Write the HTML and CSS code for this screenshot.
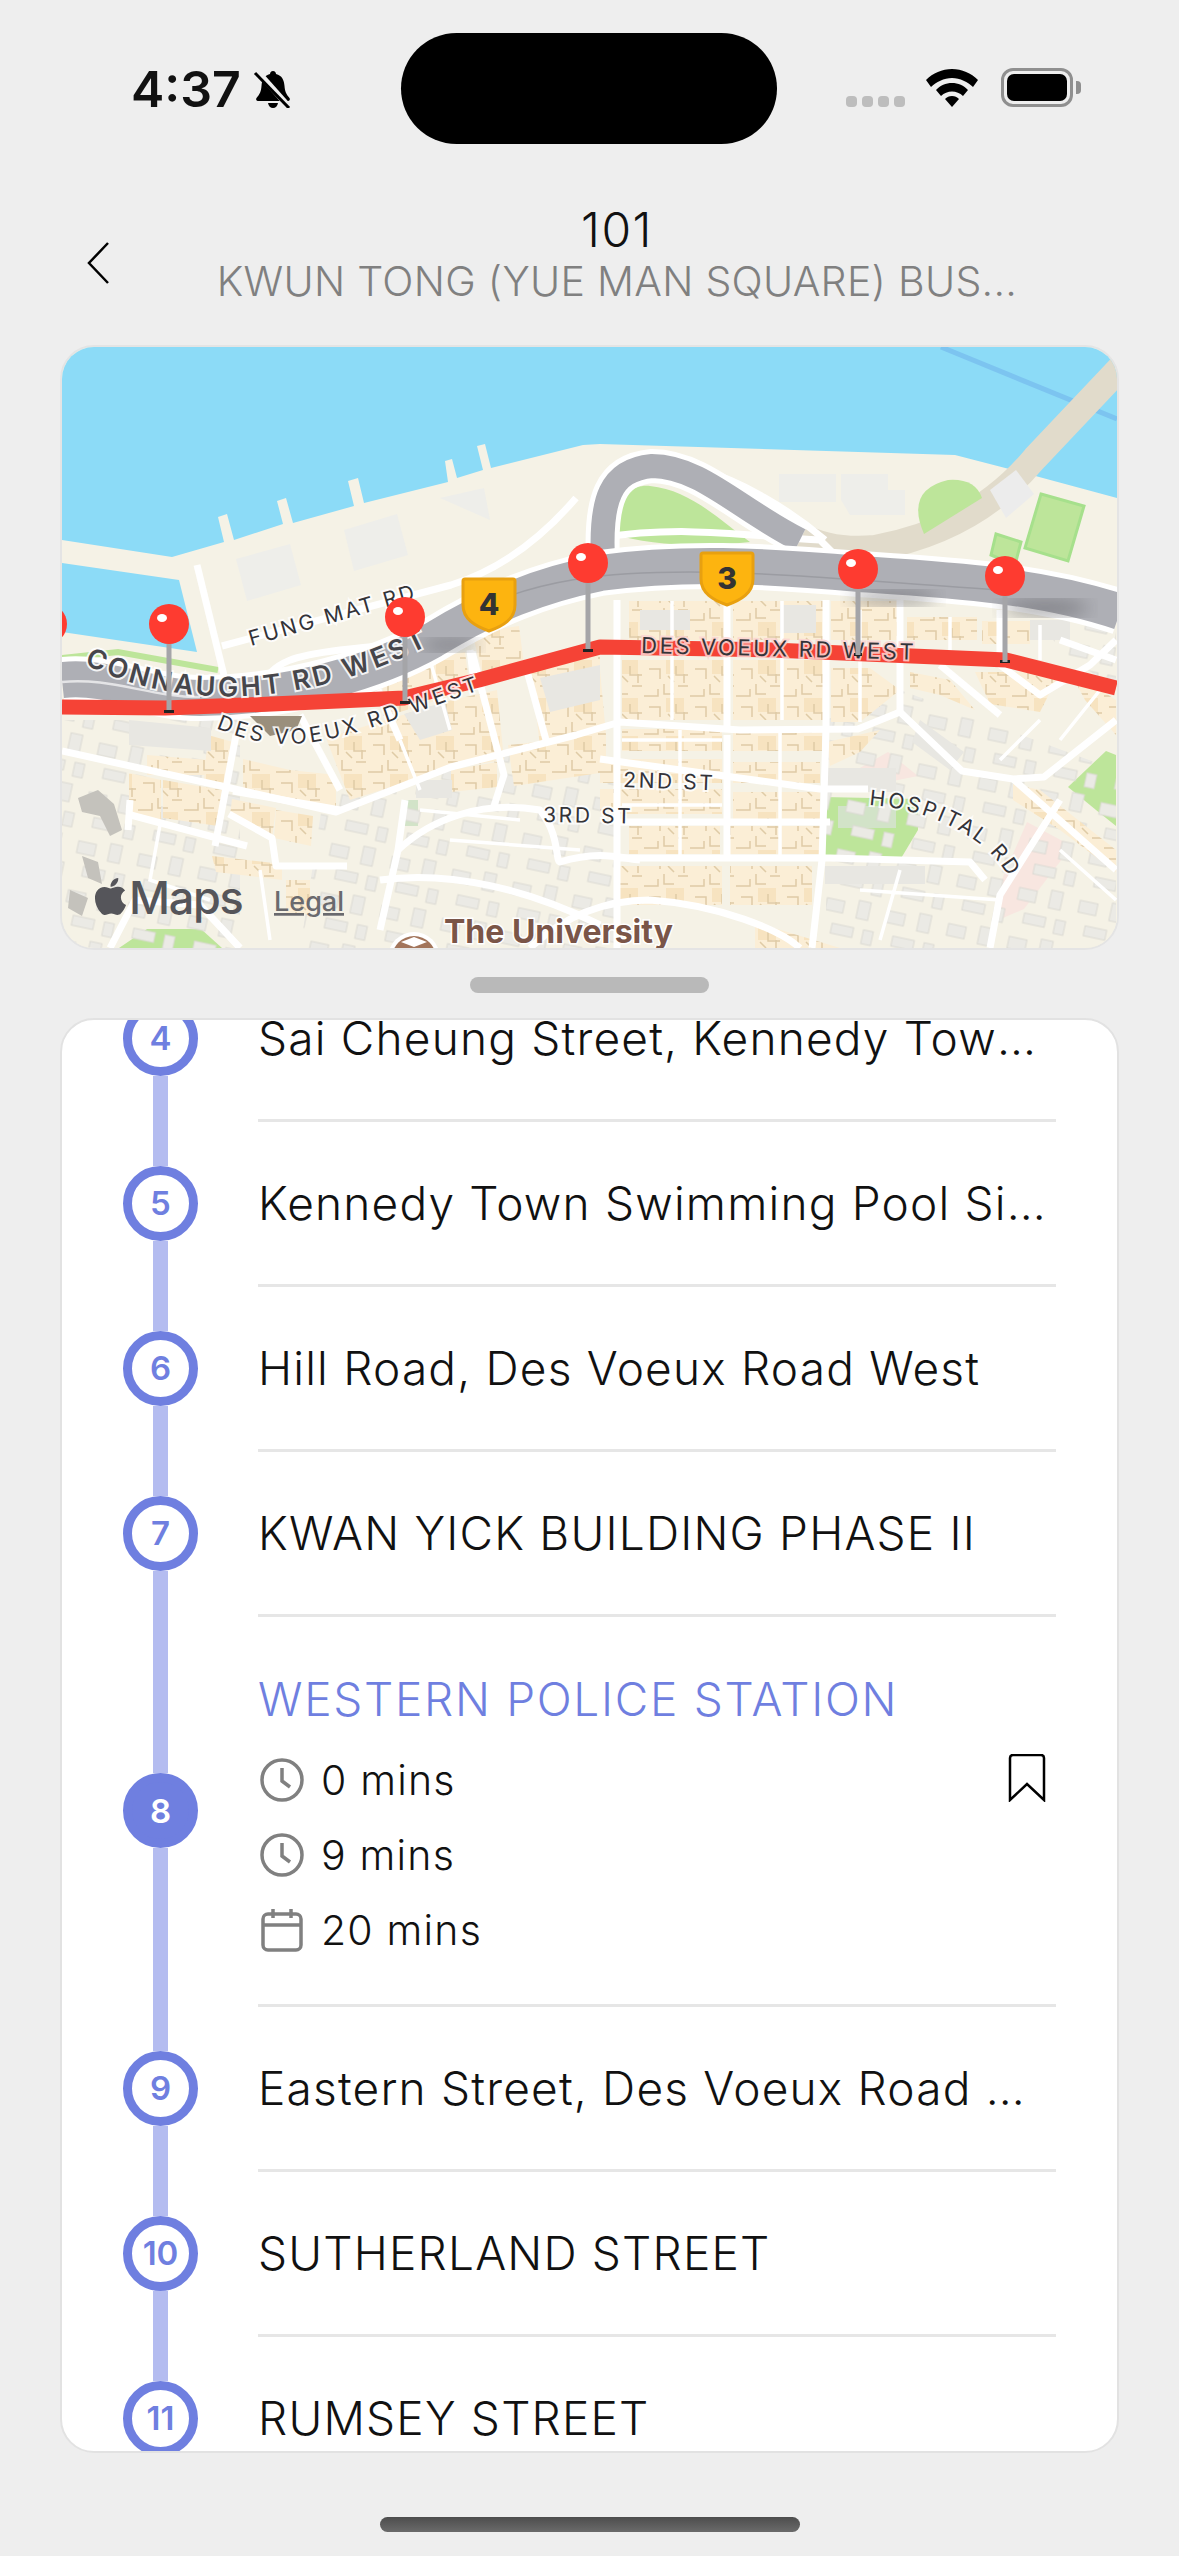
FILE: index.html
```html
<!DOCTYPE html>
<html lang="en">
<head>
  <meta charset="UTF-8">
  <meta name="viewport" content="width=device-width, initial-scale=1.0">
  <title>Route 101</title>
  <link rel="stylesheet" href="styles.css">
</head>
<body>
  <div class="island"></div>

  <div class="status-bar">
    <div class="status-left">
      <span class="time">4:37</span>
      <svg class="bell" viewBox="0 0 40 38">
        <path class="solid" d="M20 1c-2 0-3 1.500-3 3-6 1.500-8 6-8.500 12-.4 5-1.500 8-5 12-1 1.500 0 3 1.500 3h30c1.500 0 2.500-1.500 1.500-3-3.500-4-4.600-7-5-12-.5-6-2.500-10.500-8.500-12 0-1.500-1-3-3-3z"/>
        <path class="solid" d="M15 33h10c-.5 3-2.500 5-5 5s-4.500-2-5-5z"/>
        <path class="slash-gap" d="M4 1l33 37"/>
        <path class="slash" d="M2 3l34 35"/>
      </svg>
    </div>
    <div class="status-right">
      <div class="signal"><i></i><i></i><i></i><i></i></div>
      <svg class="wifi" viewBox="0 0 52 38">
        <path class="solid" d="M26 0c10 0 19 4 26 11l-5 7c-5-5-13-9-21-9S10 13 5 18L0 11C7 4 16 0 26 0z"/>
        <path class="solid" d="M26 14c6 0 12 2.500 16 7l-5 6c-3-3-7-4.500-11-4.500S18 24 15 27l-5-6c4-4.500 10-7 16-7z"/>
        <path class="solid" d="M26 27c3 0 5 1 7 3l-7 8-7-8c2-2 4-3 7-3z"/>
      </svg>
      <div class="battery"><div class="battery-level"></div></div>
      <div class="battery-nub"></div>
    </div>
  </div>

  <div class="nav">
    <div class="back">
      <svg viewBox="0 0 22 42"><path class="line-black" d="M21 1L2 21l19 20"/></svg>
    </div>
    <div class="title">
      <div class="route-no">101</div>
      <div class="route-name">KWUN TONG (YUE MAN SQUARE) BUS...</div>
    </div>
  </div>

  <div class="map-card">
    <svg class="map" viewBox="62 347 1055 601">
      <defs>
        <filter id="soft"><feGaussianBlur stdDeviation="9"/></filter>
        <pattern id="hatch" width="46" height="38" patternUnits="userSpaceOnUse">
          <rect class="hatch-base" width="46" height="38"/>
          <rect class="hatch-fill" x="22" y="14" width="18" height="14"/>
          <path class="hatch-line" d="M0 12h14V5M20 0v10h10M34 2h10M32 20v9h12M5 23h11v10M24 30l6 6M40 28v9"/>
        </pattern>
        <pattern id="hill" width="62" height="50" patternUnits="userSpaceOnUse" patternTransform="rotate(12)">
          <rect class="hill-block" x="4" y="6" width="18" height="12"/>
          <rect class="hill-block" x="36" y="2" width="12" height="18"/>
          <rect class="hill-block" x="14" y="30" width="22" height="10"/>
          <rect class="hill-block" x="46" y="30" width="10" height="14"/>
        </pattern>
        <path id="curveConnaught" d="M84 664 C 150 696 220 702 285 692 C 340 684 395 664 450 634"/>
        <path id="curveVoeux" d="M216 728 C 240 738 262 744 290 744 C 350 742 410 712 510 680"/>
        <path id="curveHospital" d="M869 805 C 910 808 950 820 985 848 C 1000 862 1010 875 1030 915"/>
      </defs>

      <rect class="land" x="62" y="347" width="1055" height="601"/>
      <path class="water" d="M62 347H1117V498L1013 470 955 455 600 444 583 445 491 468 485 444 477 446 483 470 457 478 452 459 445 461 448 482 364 503 358 478 348 481 354 506 293 523 286 498 277 501 283 524 234 540 227 514 218 517 224 542 172 557 62 540Z"/>
      <path class="water" d="M62 563L179 580 197 652 62 632Z"/>
      <path class="channel" d="M941 347L1117 419"/>
      <path class="causeway" d="M1122 366L1035 458Q975 530 875 548 830 552 800 535"/>
      <path class="causeway-cap" d="M990 490l16 28 28-24-18-24z"/>

      <!-- port sheds -->
      <path class="shed" d="M236 559L290 544 301 585 247 601Z"/>
      <path class="shed" d="M344 530L397 514 408 555 354 571Z"/>
      <path class="shed" d="M440 498L484 488 490 520Z"/>
      <path class="shed" d="M779 474H836V502H779Z"/>
      <path class="shed" d="M841 474H888V490H905V515H850L841 500Z"/>

      <!-- parks -->
      <path class="park" d="M924 534Q905 490 948 480 975 478 982 498Z"/>
      <path class="park-edge" d="M1041 494L1084 506 1068 561 1025 548Z"/>
      <path class="park-edge" d="M996 534L1021 542 1015 565 991 555Z"/>
      <path class="park-edge" d="M841 688H855V712H841Z"/>
      <path class="park" d="M824 797L918 799 918 830 900 860 824 858Z"/>
      <path class="park-pale" d="M838 806H896V828H838Z"/>
      <path class="park" d="M1068 787L1106 751 1116 755 1116 826 1096 810Z"/>
      <path class="park" d="M119 948L147 929H201L222 948Z"/>
      <path class="park" d="M612 534C606 500 630 484 650 486 690 490 720 520 750 542 700 548 650 545 612 534Z"/>
      <path class="park-stroke" d="M62 658L118 652 218 670"/>
      <path class="hospital" d="M1027 822L1072 846 1024 909 996 921V893Z"/>
      <path class="hospital" d="M860 768l28-16 30 24-30 6z"/>
      <path class="park-pale" d="M404 800h14v26h-14z"/>

      <!-- hillside housing -->
      <g class="hill-areas">
        <path d="M62 720H240V950H62Z"/>
        <path d="M326 780L520 745 620 780V950H300Z"/>
        <path d="M826 720L900 690 1116 770V950H826Z"/>
        <path d="M1040 620H1116V690L1060 650Z"/>
      </g>

      <!-- built up blocks -->
      <g class="blocks">
        <path d="M383 668L465 652 470 690 400 712 383 716Z"/>
        <path d="M472 632L519 626 524 665 483 676Z"/>
        <path d="M530 664L600 648V670L606 735 540 746Z"/>
        <path d="M326 738L452 700 497 690 504 760 451 768 350 800Z"/>
        <path d="M451 770L497 762V787L451 792Z"/>
        <path d="M508 745L606 735V772L514 786Z"/>
        <path d="M147 755L208 760V775H147Z"/>
        <path d="M208 735L233 742 224 783 204 780Z"/>
        <path d="M243 759L290 770 336 775V808L243 790Z"/>
        <path d="M129 773L161 780V822L129 815Z"/>
        <path d="M163 780L222 790 218 826 163 818Z"/>
        <path d="M232 799L276 808 272 838 230 816Z"/>
        <path d="M276 810L313 816 311 846 274 838Z"/>
        <path d="M212 856L282 864V880L216 872Z"/>
        <path d="M286 880h24v34h-24z"/>
        <path d="M629 601H724V640H629Z"/>
        <path d="M733 601H827V640H733Z"/>
        <path d="M831 601H900V640H831Z"/>
        <path d="M907 617H977V640H907Z"/>
        <path d="M982 621H1030V644H982Z"/>
        <path d="M622 660H724V720H622Z"/>
        <path d="M733 660H827V720H733Z"/>
        <path d="M831 668H870L900 690 860 722H831Z"/>
        <path d="M910 672L950 680 975 710 940 695 910 688Z"/>
        <path d="M975 672H1060L1040 712 990 704Z"/>
        <path d="M1068 668L1116 700V735L1085 700Z"/>
        <path d="M622 729H722V751H622Z"/>
        <path d="M733 729H822V751H733Z"/>
        <path d="M827 742L880 730 860 752 830 766Z"/>
        <path d="M600 759H722V783H600Z"/>
        <path d="M733 762H820V783H733Z"/>
        <path d="M600 789H722V814H600Z"/>
        <path d="M733 792H820V820H733Z"/>
        <path d="M629 826H720V854H629Z"/>
        <path d="M730 826H820V854H730Z"/>
        <path d="M618 866H722V905H618Z"/>
        <path d="M730 866H812V905H730Z"/>
        <path d="M1013 784L1040 790 1116 850V872L1060 830 1013 800Z"/>
        <path d="M755 922L840 948H755Z"/>
      </g>

      <!-- grey buildings -->
      <g class="grey-blocks">
        <path d="M129 720L211 728V751L129 745Z"/>
        <path d="M404 714L445 702 452 730 420 740Z"/>
        <path d="M540 678L600 665V700L550 712Z"/>
        <path d="M416 780h36v18h-36z"/>
        <path d="M826 768h70v24h-70z"/>
        <path d="M920 720l44 32-14 18-38-28z"/>
        <path d="M825 866h100v18h-100z"/>
        <path d="M780 605h36v28h-36z"/>
        <path d="M640 610h50v20h-50z"/>
        <path d="M1030 620h40v20h-40z"/>
      </g>
      <path class="dark-blocks" d="M78 798l20-8 16 14 8 26-12 6-10-20-18-4zM82 856l16 6 4 22-14-6zM70 890l18 8-6 18-14-8z"/>

      <!-- streets -->
      <g class="streets">
        <path d="M62 751L226 787 336 812 451 767 576 735 620 722 740 730 858 729 900 712 962 771 1013 779 1044 777 1116 720"/>
        <path d="M236 735L215 846"/>
        <path d="M472 652L504 775 494 806"/>
        <path d="M600 759L820 789H868"/>
        <path d="M620 822H830"/>
        <path d="M620 858H830L970 862 985 880"/>
        <path d="M617 600V948"/>
        <path d="M727 600V730M727 735V860"/>
        <path d="M826 600V730L822 860 812 948"/>
        <path d="M900 600V712"/>
        <path d="M1000 610V665L1040 695 1090 665 1116 640"/>
        <path d="M940 665L1000 715"/>
        <path d="M1013 779L1116 870"/>
        <path d="M1060 800L1000 895 990 948"/>
        <path d="M127 814L247 846"/>
        <path d="M233 791L340 810"/>
        <path d="M229 814L272 838 276 866 347 866"/>
        <path d="M130 800L128 830"/>
        <path d="M405 800L398 850 380 930"/>
        <path d="M398 850C430 820 480 800 540 810 560 835 555 860 560 862 600 850 620 858 640 860"/>
        <path d="M380 880C450 870 530 890 600 925"/>
        <path d="M110 948L135 900 200 905 240 948"/>
        <path d="M530 948C560 920 600 900 650 900 720 905 780 930 800 948"/>
        <path d="M300 715L340 790"/>
        <path d="M378 690L400 740"/>
        <path d="M470 650L475 690"/>
        <path d="M524 660L546 740"/>
        <path d="M197 565L229 696"/>
        <path d="M222 646L451 585C500 570 540 540 576 498"/>
        <path d="M260 690C270 660 300 655 340 650 390 645 440 640 470 625"/>
        <path d="M600 538C680 525 740 535 820 540L850 570"/>
        <path d="M700 470C740 480 790 510 825 540"/>
        <path d="M1116 660L1060 640"/>
      </g>
      <g class="lanes">
        <path d="M672 601V720M782 601V720M622 740H722M622 805H722M680 730V860M780 730V860M860 610V722"/>
        <path d="M950 617V665M1040 625V660M430 660L450 730M400 740L420 790"/>
        <path d="M1100 690L1060 740M1040 720L1000 760M160 825L150 880 210 900M260 870L270 940"/>
        <path d="M420 810L520 820M450 840L580 850M860 890L1000 900M900 870L880 940M1060 850L1116 900"/>
      </g>

      <!-- highways -->
      <path class="hw-edge" d="M603 560C600 500 610 470 652 466 700 466 740 510 800 540"/>
      <path class="hw" d="M603 560C600 500 610 470 652 466 700 466 740 510 800 540"/>
      <path class="hw-edge wide" d="M62 680C110 675 150 698 200 698 290 698 380 670 433 640 490 605 540 585 600 573 680 562 760 565 860 574 950 580 1040 585 1120 612"/>
      <path class="hw wide" d="M62 680C110 675 150 698 200 698 290 698 380 670 433 640 490 605 540 585 600 573 680 562 760 565 860 574 950 580 1040 585 1120 612"/>
      <path class="hw-split" d="M470 612C540 578 610 572 690 572 780 572 900 584 1000 590"/>
      <path class="hw-lane" d="M62 682C110 677 150 697 200 697"/>
      <ellipse class="under" cx="893" cy="598" rx="44" ry="7" filter="url(#soft)"/>
      <ellipse class="under" cx="1045" cy="608" rx="44" ry="8" filter="url(#soft)"/>
      <ellipse class="under" cx="450" cy="645" rx="30" ry="6" filter="url(#soft)"/>

      <!-- route -->
      <path class="route" d="M62 707L165 708 272 704 404 698 479 680 600 647 772 650 1006 660 1116 688"/>
      <path class="landmark" d="M250 716h52l-6 14-26 6z"/>

      <!-- labels -->
      <text class="label label-big"><textPath href="#curveConnaught">CONNAUGHT RD WEST</textPath></text>
      <text class="label" transform="translate(251 646) rotate(-16)">FUNG MAT RD</text>
      <text class="label label-curve"><textPath href="#curveVoeux">DES VOEUX RD WEST</textPath></text>
      <text class="label label-route" transform="translate(641 653) rotate(1.4)">DES VOEUX RD WEST</text>
      <text class="label" transform="translate(623 787) rotate(2)">2ND ST</text>
      <text class="label" transform="translate(543 822) rotate(1)">3RD ST</text>
      <text class="label"><textPath href="#curveHospital">HOSPITAL RD</textPath></text>

      <!-- shields -->
      <g transform="translate(463 579)">
        <path class="shield" d="M2 0h48q2 0 2 2v24C52 40 40 47 26 52 12 47 0 40 0 26V2q0-2 2-2z"/>
        <text class="shield-no" x="26" y="36">4</text>
      </g>
      <g transform="translate(701 553)">
        <path class="shield" d="M2 0h48q2 0 2 2v24C52 40 40 47 26 52 12 47 0 40 0 26V2q0-2 2-2z"/>
        <text class="shield-no" x="26" y="36">3</text>
      </g>

      <!-- pins -->
      <g class="pin" transform="translate(169 624)"><path class="pin-foot" d="M-5 86h10v3h-10z"/><path class="pin-stem" d="M0 18V86"/><circle class="pin-head" r="20"/><ellipse class="pin-shine" cx="-7" cy="-6" rx="5" ry="4"/></g>
      <g class="pin" transform="translate(405 617)"><path class="pin-foot" d="M-5 84h10v3h-10z"/><path class="pin-stem" d="M0 18V84"/><circle class="pin-head" r="20"/><ellipse class="pin-shine" cx="-7" cy="-6" rx="5" ry="4"/></g>
      <g class="pin" transform="translate(588 563)"><path class="pin-foot" d="M-5 86h10v3h-10z"/><path class="pin-stem" d="M0 18V86"/><circle class="pin-head" r="20"/><ellipse class="pin-shine" cx="-7" cy="-6" rx="5" ry="4"/></g>
      <g class="pin" transform="translate(858 569)"><path class="pin-foot" d="M-4 84h8v3h-8z"/><path class="pin-stem" d="M0 18V86"/><circle class="pin-head" r="20"/><ellipse class="pin-shine" cx="-7" cy="-6" rx="5" ry="4"/></g>
      <g class="pin" transform="translate(1005 576)"><path class="pin-foot" d="M-5 84h10v3h-10z"/><path class="pin-stem" d="M0 18V86"/><circle class="pin-head" r="20"/><ellipse class="pin-shine" cx="-7" cy="-6" rx="5" ry="4"/></g>
      <circle class="pin-head" cx="47" cy="624" r="20"/>

      <!-- attribution -->
      <svg x="92" y="876" width="37" height="41" viewBox="3 2 18 20">
        <path class="maps-mark" d="M17.050 20.280c-.98.95-2.050.8-3.080.35-1.090-.46-2.090-.48-3.240 0-1.440.62-2.200.44-3.060-.35C2.790 15.250 3.510 7.590 9.050 7.310c1.350.07 2.290.74 3.080.8 1.180-.24 2.310-.93 3.570-.84 1.510.12 2.650.72 3.400 1.800-3.120 1.870-2.380 5.980.48 7.130-.57 1.500-1.310 2.990-2.540 4.090zM12.030 7.250c-.15-2.230 1.660-4.070 3.740-4.250.29 2.580-2.340 4.500-3.740 4.250z"/>
      </svg>
      <text class="maps-word" x="129" y="914">Maps</text>
      <text class="maps-legal" x="274" y="911">Legal</text>
      <circle class="uni-ring" cx="414" cy="958" r="26"/>
      <circle class="uni-dot" cx="414" cy="958" r="22"/>
      <path class="uni-cap" d="M414 937l13 5-13 5-13-5z"/>
      <text class="uni-name" x="444" y="943">The University</text>
    </svg>
  </div>

  <div class="handle"></div>

  <div class="stops-card">
    <div class="stops">
      <div class="stop">
        <div class="rail"><div class="seg"></div><div class="node">4</div><div class="seg seg-end"></div></div>
        <div class="stop-body"><div class="stop-name">Sai Cheung Street, Kennedy Town Praya</div></div>
      </div>
      <div class="stop">
        <div class="rail"><div class="seg"></div><div class="node">5</div><div class="seg seg-end"></div></div>
        <div class="stop-body"><div class="stop-name">Kennedy Town Swimming Pool Sitting Out Area</div></div>
      </div>
      <div class="stop">
        <div class="rail"><div class="seg"></div><div class="node">6</div><div class="seg seg-end"></div></div>
        <div class="stop-body"><div class="stop-name">Hill Road, Des Voeux Road West</div></div>
      </div>
      <div class="stop">
        <div class="rail"><div class="seg"></div><div class="node">7</div><div class="seg seg-end"></div></div>
        <div class="stop-body"><div class="stop-name">KWAN YICK BUILDING PHASE II</div></div>
      </div>
      <div class="stop stop-open">
        <div class="rail"><div class="seg"></div><div class="node node-active">8</div><div class="seg seg-end"></div></div>
        <div class="stop-body stop-body-open">
          <div class="stop-name stop-name-active">WESTERN POLICE STATION</div>
          <div class="eta-wrap">
            <div class="etas">
              <div class="eta">
                <svg class="eta-icon" viewBox="0 0 44 44"><circle class="line-grey" cx="22" cy="22" r="20"/><path class="line-grey" d="M22 10v13l8 6"/></svg>
                <span>0 mins</span>
              </div>
              <div class="eta">
                <svg class="eta-icon" viewBox="0 0 44 44"><circle class="line-grey" cx="22" cy="22" r="20"/><path class="line-grey" d="M22 10v13l8 6"/></svg>
                <span>9 mins</span>
              </div>
              <div class="eta">
                <svg class="eta-icon" viewBox="0 0 44 44"><rect class="line-grey" x="3" y="6" width="38" height="36" rx="5"/><path class="line-grey" d="M3 17h38M13 1v9M31 1v9"/></svg>
                <span>20 mins</span>
              </div>
            </div>
            <svg class="bookmark" viewBox="0 0 38 48"><path class="line-black" d="M2 46V4q0-3 3-3h28q3 0 3 3v42L19 30z"/></svg>
          </div>
        </div>
      </div>
      <div class="stop">
        <div class="rail"><div class="seg"></div><div class="node">9</div><div class="seg seg-end"></div></div>
        <div class="stop-body"><div class="stop-name">Eastern Street, Des Voeux Road West</div></div>
      </div>
      <div class="stop">
        <div class="rail"><div class="seg"></div><div class="node">10</div><div class="seg seg-end"></div></div>
        <div class="stop-body"><div class="stop-name">SUTHERLAND STREET</div></div>
      </div>
      <div class="stop">
        <div class="rail"><div class="seg"></div><div class="node">11</div><div class="seg seg-end"></div></div>
        <div class="stop-body"><div class="stop-name">RUMSEY STREET</div></div>
      </div>
    </div>
  </div>

  <div class="home-bar"></div>
</body>
</html>
```

FILE: styles.css
```css
* {
  margin: 0;
  padding: 0;
  box-sizing: border-box;
}

body {
  font-family: 'Inter', 'Noto Sans', sans-serif;
  width: 1179px;
  height: 2556px;
  background: #eeeeee;
  color: #111;
  position: relative;
  overflow: hidden;
}

/* Status bar */
.island {
  position: absolute;
  left: 401px;
  top: 33px;
  width: 376px;
  height: 111px;
  border-radius: 56px;
  background: #000;
}

.status-bar {
  height: 190px;
  padding: 67px 98px 0 131px;
  display: flex;
  justify-content: space-between;
  align-items: flex-start;
}

.status-left {
  display: flex;
  align-items: center;
  gap: 12px;
}

.time {
  font-size: 50px;
  font-weight: 600;
  line-height: 44px;
}

.bell {
  width: 40px;
  height: 38px;
}

.solid { fill: #000; }
.slash-gap { fill: none; stroke: #eeeeee; stroke-width: 6; }
.slash { fill: none; stroke: #000; stroke-width: 3; }

.status-right {
  display: flex;
  align-items: center;
  padding-top: 1px;
}

.signal {
  display: flex;
  gap: 5px;
  margin-right: 21px;
  padding-top: 28px;
}

.signal i {
  width: 11px;
  height: 11px;
  border-radius: 4px;
  background: #bdbdbd;
}

.wifi {
  width: 52px;
  height: 38px;
  margin-right: 23px;
}

.battery {
  width: 72px;
  height: 39px;
  border: 3px solid #8f8f8f;
  border-radius: 12px;
  padding: 3px;
}

.battery-level {
  height: 100%;
  background: #000;
  border-radius: 7px;
}

.battery-nub {
  width: 5px;
  height: 13px;
  margin-left: 3px;
  border-radius: 0 4px 4px 0;
  background: #8f8f8f;
}

/* Nav */
.nav {
  height: 155px;
  padding: 13px 100px 0 87px;
  display: flex;
  align-items: flex-start;
}

.back {
  width: 68px;
  padding-top: 39px;
}

.back svg {
  display: block;
  width: 22px;
  height: 42px;
}

.line-black {
  fill: none;
  stroke: #000;
  stroke-width: 2.5;
}

.title {
  flex: 1;
  min-width: 0;
  text-align: center;
}

.route-no {
  font-size: 48px;
  font-weight: 300;
  line-height: 53px;
  letter-spacing: 1.500px;
}

.route-name {
  font-size: 41px;
  font-weight: 300;
  line-height: 50px;
  letter-spacing: 0.300px;
  color: #808080;
  white-space: nowrap;
}

/* Map */
.map-card {
  margin: 0 60px;
  height: 605px;
  border: 2px solid #e4e4e4;
  border-radius: 34px;
  overflow: hidden;
  background: #f5f1e4;
}

.map {
  display: block;
  width: 1055px;
  height: 601px;
}

.land { fill: #f5f2e6; }
.water { fill: #8cdbf7; }
.channel { fill: none; stroke: #7cc4f0; stroke-width: 5; }
.causeway { fill: none; stroke: #e1dbcb; stroke-width: 26; }
.causeway-cap { fill: #ececec; }
.shed { fill: #eeeeea; }
.park { fill: #bde59a; }
.park-edge { fill: #bde59a; stroke: #a6e08c; stroke-width: 3; }
.park-pale { fill: #d2e3c8; }
.park-stroke { fill: none; stroke: #bde59a; stroke-width: 6; }
.hospital { fill: #f8e6e0; }

.hatch-base { fill: #fbeed6; }
.hatch-fill { fill: #f7e3c0; }
.hatch-line { fill: none; stroke: #dfcba6; stroke-width: 1.500; }
.hill-block { fill: #ebeae5; stroke: #dcdad3; stroke-width: 1; }
.hill-areas { fill: url(#hill); }
.blocks { fill: url(#hatch); }
.grey-blocks { fill: #e8e7e2; }
.dark-blocks { fill: #c4c2bc; }

.streets { fill: none; stroke: #fff; stroke-width: 7; stroke-linejoin: round; }
.lanes { fill: none; stroke: #fff; stroke-width: 3.500; }

.hw, .hw-edge, .hw-split, .hw-lane { fill: none; }
.hw { stroke: #aeafb5; stroke-width: 24; }
.hw.wide { stroke-width: 36; }
.hw-edge { stroke: #fff; stroke-width: 34; }
.hw-edge.wide { stroke-width: 46; }
.hw-split { stroke: #9b9ca2; stroke-width: 1.500; }
.hw-lane { stroke: #e4e4e6; stroke-width: 2.500; }
.under { fill: #55555a; opacity: 0.55; }

.route { fill: none; stroke: #f54336; stroke-width: 15; stroke-linejoin: round; }
.landmark { fill: #9a8f7c; }

.label {
  font-size: 21px;
  letter-spacing: 2.600px;
  fill: #333338;
  stroke: #fff;
  stroke-width: 4px;
  stroke-opacity: 0.85;
  paint-order: stroke;
}

.label-big {
  font-size: 27px;
  font-weight: 600;
  letter-spacing: 3px;
  fill: #46464b;
}

.label-curve {
  letter-spacing: 3.300px;
}

.label-route {
  font-size: 22px;
  stroke: #fbd4d2;
}

.shield { fill: #fdb40f; stroke: #e8a010; stroke-width: 3; }

.shield-no {
  font-size: 30px;
  font-weight: 800;
  text-anchor: middle;
  fill: #333;
}

.pin-stem { stroke: #a5a5a8; stroke-width: 5; }
.pin-foot { fill: #222; }
.pin-head { fill: #fe3b30; }
.pin-shine { fill: #fff; }

.maps-mark { fill: #55555a; }

.maps-word {
  font-size: 45px;
  font-weight: 500;
  letter-spacing: -1.300px;
  fill: #55555a;
}

.maps-legal {
  font-size: 27px;
  font-weight: 500;
  fill: #6a6a6e;
  text-decoration: underline;
}

.uni-ring { fill: #fff; }
.uni-dot { fill: #a2745a; }
.uni-cap { fill: #fff; }

.uni-name {
  font-size: 32px;
  font-weight: 700;
  fill: #7a5548;
  stroke: #fff;
  stroke-width: 3px;
  paint-order: stroke;
}

.handle {
  width: 239px;
  height: 16px;
  margin: 27px 0 25px 470px;
  border-radius: 8px;
  background: #b9b9b9;
}

/* Stops */
.stops-card {
  margin: 0 60px;
  height: 1435px;
  border: 2px solid #e2e2e2;
  border-radius: 34px;
  background: #fff;
  overflow: hidden;
}

.stops {
  margin-top: -63px;
}

.stop {
  display: flex;
  height: 165px;
}

.stop-open {
  height: 390px;
}

.rail {
  width: 196px;
  padding-left: 61px;
  display: flex;
  flex-direction: column;
  flex-shrink: 0;
}

.seg {
  flex: 1 1 0;
  width: 15px;
  margin-left: 30px;
  background: #b4bcf0;
}

.seg-end {
  flex-basis: 3px;
}

.node {
  width: 75px;
  height: 75px;
  flex-shrink: 0;
  border: 9px solid #6f7fe0;
  border-radius: 50%;
  background: #fff;
  color: #6f7fe0;
  font-size: 33px;
  font-weight: 600;
  display: flex;
  align-items: center;
  justify-content: center;
}

.node-active {
  background: #6f7fe0;
  color: #fff;
}

.stop-body {
  flex: 1;
  min-width: 0;
  margin-right: 61px;
  border-bottom: 3px solid #e6e6e6;
  display: flex;
  flex-direction: column;
  justify-content: center;
}

.stop-body-open {
  justify-content: flex-start;
  padding-top: 54px;
}

.stop-name {
  font-size: 46px;
  font-weight: 300;
  line-height: 56px;
  letter-spacing: 1.200px;
  padding-right: 10px;
  white-space: nowrap;
  overflow: hidden;
  text-overflow: ellipsis;
}

.stop-name-active {
  color: #6f7fe0;
  letter-spacing: 1.700px;
}

.eta-wrap {
  display: flex;
  justify-content: space-between;
  align-items: flex-start;
  padding: 15px 10px 0 2px;
}

.eta {
  height: 75px;
  display: flex;
  align-items: center;
  gap: 17px;
  font-size: 41px;
  font-weight: 300;
  letter-spacing: 1.200px;
}

.eta-icon {
  width: 44px;
  height: 44px;
}

.line-grey {
  fill: none;
  stroke: #808080;
  stroke-width: 3.500;
}

.bookmark {
  width: 38px;
  height: 48px;
  margin-top: 12px;
}

.home-bar {
  width: 420px;
  height: 15px;
  margin: 64px 0 0 380px;
  border-radius: 8px;
  background: linear-gradient(#4d4d4d, #6a6a6a);
}
```
